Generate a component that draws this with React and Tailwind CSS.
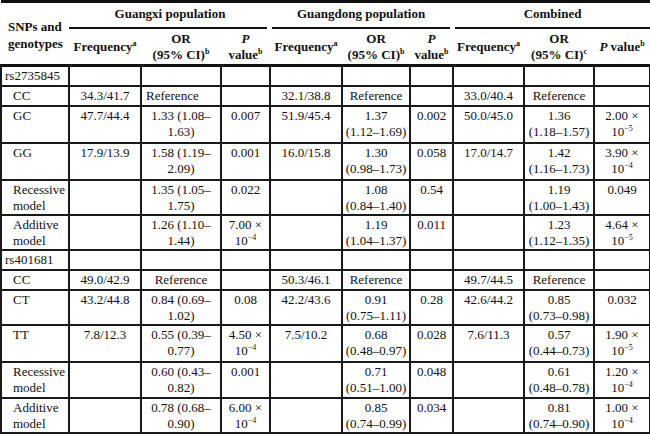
import React from 'react';

const M = '\u2013';

function Sup({ children }) {
  return <span className="text-[8px] leading-none relative -top-[5px] align-baseline">{children}</span>;
}

function Pv({ v, e }) {
  return (
    <>
      {v} ×<br />
      10<Sup>−{e}</Sup>
    </>
  );
}

function Or1({ a, b, c }) {
  return (
    <>
      {a} ({b}{M}
      <br />
      {c})
    </>
  );
}

function Or2({ a, b, c }) {
  return (
    <>
      {a}
      <br />({b}{M}{c})
    </>
  );
}

const rows = [
  { label: 'rs2735845', snp: true, h: 'h-[20px]' },
  { label: 'CC', h: 'h-[20px]', c: ['34.3/41.7', 'REFL', '', '32.1/38.8', 'Reference', '', '33.0/40.4', 'Reference', ''] },
  { label: 'GC', h: 'h-[37px]', c: ['47.7/44.4', <Or1 a="1.33" b="1.08" c="1.63" />, '0.007', '51.9/45.4', <Or2 a="1.37" b="1.12" c="1.69" />, '0.002', '50.0/45.0', <Or2 a="1.36" b="1.18" c="1.57" />, <Pv v="2.00" e="5" />] },
  { label: 'GG', h: 'h-[37px]', c: ['17.9/13.9', <Or1 a="1.58" b="1.19" c="2.09" />, '0.001', '16.0/15.8', <Or2 a="1.30" b="0.98" c="1.73" />, '0.058', '17.0/14.7', <Or2 a="1.42" b="1.16" c="1.73" />, <Pv v="3.90" e="4" />] },
  { label: <>Recessive<br />model</>, h: 'h-[35px]', c: ['', <Or1 a="1.35" b="1.05" c="1.75" />, '0.022', '', <Or2 a="1.08" b="0.84" c="1.40" />, '0.54', '', <Or2 a="1.19" b="1.00" c="1.43" />, '0.049'] },
  { label: <>Additive<br />model</>, h: 'h-[35px]', c: ['', <Or1 a="1.26" b="1.10" c="1.44" />, <Pv v="7.00" e="4" />, '', <Or2 a="1.19" b="1.04" c="1.37" />, '0.011', '', <Or2 a="1.23" b="1.12" c="1.35" />, <Pv v="4.64" e="5" />] },
  { label: 'rs401681', snp: true, h: 'h-[20px]' },
  { label: 'CC', h: 'h-[20px]', c: ['49.0/42.9', 'Reference', '', '50.3/46.1', 'Reference', '', '49.7/44.5', 'Reference', ''] },
  { label: 'CT', h: 'h-[35px]', c: ['43.2/44.8', <Or1 a="0.84" b="0.69" c="1.02" />, '0.08', '42.2/43.6', <Or2 a="0.91" b="0.75" c="1.11" />, '0.28', '42.6/44.2', <Or2 a="0.85" b="0.73" c="0.98" />, '0.032'] },
  { label: 'TT', h: 'h-[37px]', c: ['7.8/12.3', <Or1 a="0.55" b="0.39" c="0.77" />, <Pv v="4.50" e="4" />, '7.5/10.2', <Or2 a="0.68" b="0.48" c="0.97" />, '0.028', '7.6/11.3', <Or2 a="0.57" b="0.44" c="0.73" />, <Pv v="1.90" e="5" />] },
  { label: <>Recessive<br />model</>, h: 'h-[36px]', c: ['', <Or1 a="0.60" b="0.43" c="0.82" />, '0.001', '', <Or2 a="0.71" b="0.51" c="1.00" />, '0.048', '', <Or2 a="0.61" b="0.48" c="0.78" />, <Pv v="1.20" e="4" />] },
  { label: <>Additive<br />model</>, h: 'h-[35px]', c: ['', <Or1 a="0.78" b="0.68" c="0.90" />, <Pv v="6.00" e="4" />, '', <Or2 a="0.85" b="0.74" c="0.99" />, '0.034', '', <Or2 a="0.81" b="0.74" c="0.90" />, <Pv v="1.00" e="4" />] },
];

const widths = [68, 72, 80, 49, 72, 68, 43, 71, 70, 56];

export default function App() {
  return (
    <div className="w-[650px] h-[434px] bg-white text-[#111] [font-family:'Liberation_Serif',serif] text-[13px] leading-[16px] overflow-hidden">
      <table className="table-fixed border-collapse w-[649px]">
        <colgroup>
          {widths.map((w, i) => (
            <col key={i} style={{ width: w }} />
          ))}
        </colgroup>
        <thead>
          <tr className="border-t-[3px] border-[#111] h-[27px]">
            <th rowSpan={2} className="text-left font-bold align-middle pl-[7px] pt-[2px] leading-[17px]">
              SNPs and
              <br />
              genotypes
            </th>
            <th colSpan={3} className="font-bold p-0 align-bottom">
              <div className="border-b-2 border-[#111] mr-[3px] pb-[5px] pl-[4px]">Guangxi population</div>
            </th>
            <th colSpan={3} className="font-bold p-0 align-bottom">
              <div className="border-b-2 border-[#111] ml-[2px] mr-[3px] pb-[5px]">Guangdong population</div>
            </th>
            <th colSpan={3} className="font-bold p-0 align-bottom">
              <div className="border-b-2 border-[#111] ml-[2px] pb-[5px]">Combined</div>
            </th>
          </tr>
          <tr className="h-[37px] border-b-[3px] border-[#111]">
            <th className="font-bold align-middle whitespace-nowrap pt-[2px]">Frequency<Sup>a</Sup></th>
            <th className="font-bold align-middle pt-[2px]">
              OR
              <br />
              (95% CI)<Sup>b</Sup>
            </th>
            <th className="font-bold align-middle pt-[2px]">
              <i>P</i>
              <br />
              value<Sup>b</Sup>
            </th>
            <th className="font-bold align-middle whitespace-nowrap pt-[2px]">Frequency<Sup>a</Sup></th>
            <th className="font-bold align-middle pt-[2px]">
              OR
              <br />
              (95% CI)<Sup>b</Sup>
            </th>
            <th className="font-bold align-middle pt-[2px]">
              <i>P</i>
              <br />
              value<Sup>b</Sup>
            </th>
            <th className="font-bold align-middle whitespace-nowrap pt-[2px]">Frequency<Sup>a</Sup></th>
            <th className="font-bold align-middle pt-[2px]">
              OR
              <br />
              (95% CI)<Sup>c</Sup>
            </th>
            <th className="font-bold align-middle whitespace-nowrap pt-[2px]">
              <i>P</i> value<Sup>b</Sup>
            </th>
          </tr>
        </thead>
        <tbody>
          {rows.map((r, i) => (
            <tr key={i} className={r.h}>
              <td className={`border-2 border-[#1a1a1a] align-top pt-[1px] ${r.snp ? 'pl-[3px]' : 'pl-[11px]'}`}>{r.label}</td>
              {(r.c || Array(9).fill('')).map((c, j) =>
                c === 'REFL' ? (
                  <td key={j} className="border-2 border-[#1a1a1a] align-top pt-[1px] pl-[4px] text-left">
                    Reference
                  </td>
                ) : (
                  <td key={j} className="border-2 border-[#1a1a1a] align-top pt-[1px] text-center whitespace-nowrap">
                    {c}
                  </td>
                )
              )}
            </tr>
          ))}
        </tbody>
      </table>
    </div>
  );
}
